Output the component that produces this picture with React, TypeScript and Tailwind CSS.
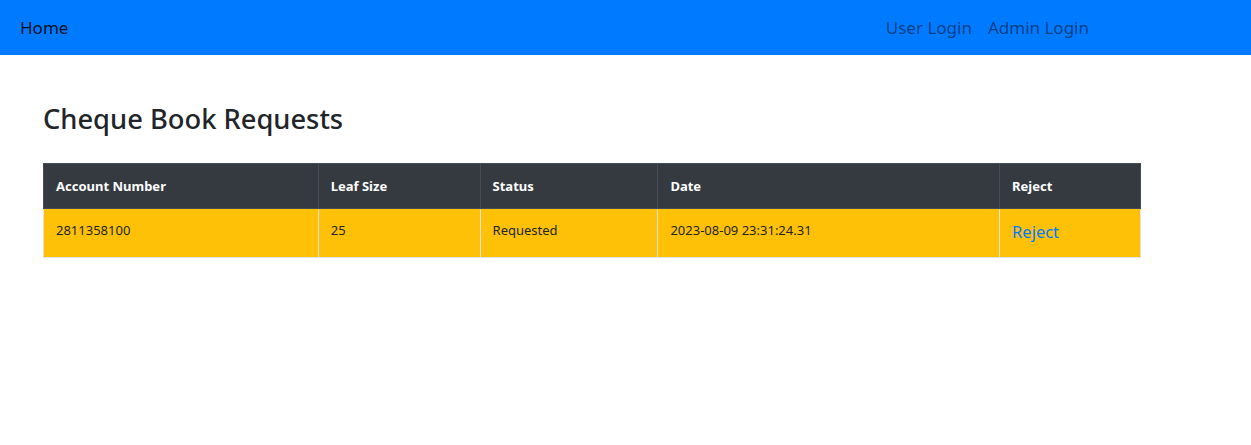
import React from "react";

export default function App() {
  const font = { fontFamily: '"Noto Sans", "Open Sans", sans-serif' };
  return (
    <div className="min-h-[445px] bg-white text-[#212529]" style={font}>
      <nav className="flex h-[55px] items-center bg-[#007bff] pl-5">
        <a className="text-[17px] leading-[26px] text-black/90">Home</a>
        <div className="ml-auto mr-[162px] flex gap-[16px] text-[17px] leading-[26px] text-black/50">
          <a>User Login</a>
          <a>Admin Login</a>
        </div>
      </nav>
      <div className="pl-[43px] pt-[46px]">
        <h2 className="text-[27.3px] font-medium leading-[36px] text-[#212529]">Cheque Book Requests</h2>
        <table className="mt-[26px] w-[1098px] border-collapse text-[13px]">
          <thead>
            <tr className="h-[45px] bg-[#343a40] text-left font-bold text-white">
              <th className="w-[275px] border border-[#454d55] px-3 pt-[1px] font-bold">Account Number</th>
              <th className="w-[162px] border border-[#454d55] px-3 pt-[1px] font-bold">Leaf Size</th>
              <th className="w-[178px] border border-[#454d55] px-3 pt-[1px] font-bold">Status</th>
              <th className="w-[342px] border border-[#454d55] px-3 pt-[1px] font-bold">Date</th>
              <th className="w-[141px] border border-[#454d55] px-3 pt-[1px] font-bold">Reject</th>
            </tr>
          </thead>
          <tbody>
            <tr className="h-[49px] bg-[#ffc107] text-[#212529]">
              <td className="border border-[#dee2e6] px-3 align-top pt-[12px]">2811358100</td>
              <td className="border border-[#dee2e6] px-3 align-top pt-[12px]">25</td>
              <td className="border border-[#dee2e6] px-3 align-top pt-[12px]">Requested</td>
              <td className="border border-[#dee2e6] px-3 align-top pt-[12px]">2023-08-09 23:31:24.31</td>
              <td className="border border-[#dee2e6] px-3 align-top pt-[11px]">
                <a className="text-[16.5px] text-[#007bff]">Reject</a>
              </td>
            </tr>
          </tbody>
        </table>
      </div>
    </div>
  );
}
